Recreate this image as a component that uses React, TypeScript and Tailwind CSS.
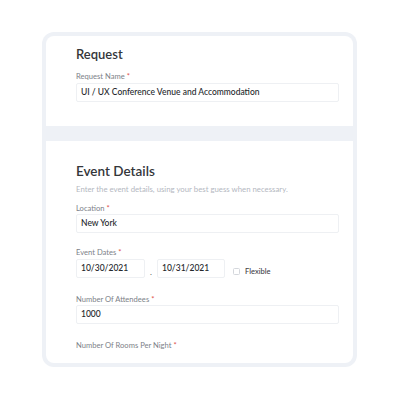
import React from 'react';

// Small field label with a red required marker
function Label({ text }: { text: string }) {
  return (
    <div className="text-[7.6px] leading-[9px] text-[#7d8189]">
      {text} <span className="text-[#e0524c]">*</span>
    </div>
  );
}

function Field({ value, className = '' }: { value: string; className?: string }) {
  return (
    <div
      className={`h-[19px] flex items-center px-[4px] border border-[#eef0f3] rounded-[2px] bg-white text-[8.5px] font-medium text-[#24272b] ${className}`}
    >
      {value}
    </div>
  );
}

export default function App() {
  return (
    <div
      className="w-[400px] h-[400px] bg-white pt-[32px] pl-[42px]"
      style={{ fontFamily: 'Lato, "Open Sans", sans-serif' }}
    >
      <div className="w-[315px] bg-[#eef1f6] rounded-[12px] p-[4px] flex flex-col gap-[15px]">
        {/* Request */}
        <div className="h-[90px] bg-white rounded-t-[8px] pl-[30px] pr-[14px] pt-[10px]">
          <h2 className="text-[13px] leading-[16px] font-semibold text-[#34363a]">Request</h2>
          <div className="mt-[10px]">
            <Label text="Request Name" />
          </div>
          <Field value="UI / UX Conference Venue and Accommodation" className="mt-[2px]" />
        </div>

        {/* Event Details */}
        <div className="bg-white rounded-b-[8px] pl-[30px] pr-[14px] pt-[22px] pb-[13px]">
          <h2 className="text-[13.5px] leading-[17px] font-semibold text-[#34363a]">Event Details</h2>
          <p className="mt-[4px] text-[7.8px] leading-[10px] text-[#b4b8bf]">
            Enter the event details, using your best guess when necessary.
          </p>

          <div className="mt-[10px]">
            <Label text="Location" />
          </div>
          <Field value="New York" className="mt-[1px]" />

          <div className="mt-[15px]">
            <Label text="Event Dates" />
          </div>
          <div className="mt-[2px] flex items-center">
            <Field value="10/30/2021" className="w-[69px]" />
            <span className="w-[12px] text-center text-[8px] text-[#555] mt-[6px]">.</span>
            <Field value="10/31/2021" className="w-[68px]" />
            <div className="ml-[8px] mt-[6px] flex items-center gap-[5px]">
              <div className="w-[7px] h-[7px] border border-[#d4d7dc] rounded-[1.5px]" />
              <span className="text-[7.5px] font-medium text-[#3f4247]">Flexible</span>
            </div>
          </div>

          <div className="mt-[17px]">
            <Label text="Number Of Attendees" />
          </div>
          <Field value="1000" className="mt-[1px]" />

          <div className="mt-[17px]">
            <Label text="Number Of Rooms Per Night" />
          </div>
        </div>
      </div>
    </div>
  );
}
